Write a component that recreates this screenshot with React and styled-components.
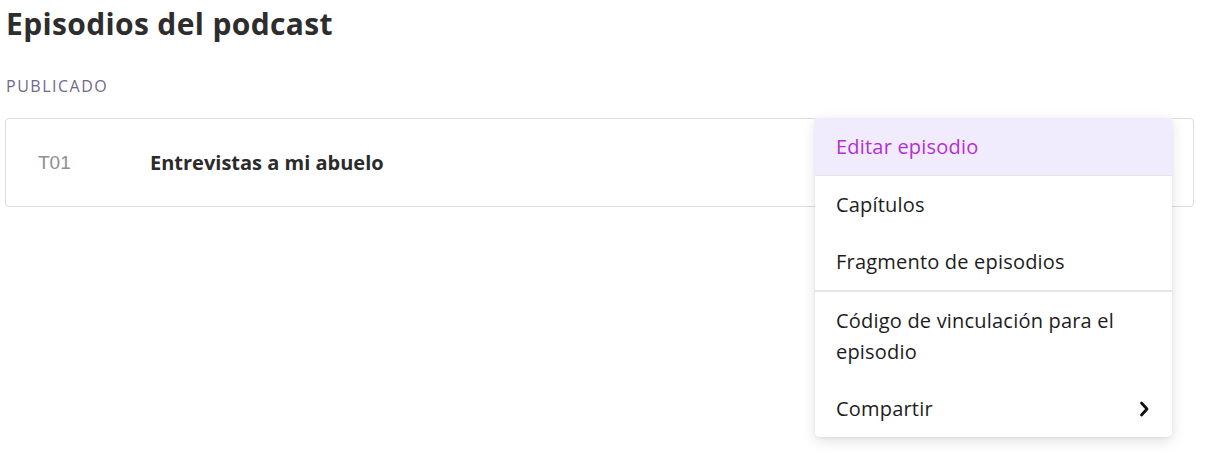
import styled, { createGlobalStyle } from 'styled-components'

const Global = createGlobalStyle`
  html, body, #root {
    min-height: 100%;
  }
  body {
    margin: 0;
    background: #fff;
    font-family: "Open Sans", Lato, sans-serif;
    color: #2b2b2b;
  }
`

const Page = styled.div`
  min-height: 472px;
  padding: 2px 14px 0 5px;
`

const Heading = styled.h1`
  margin: 0 0 0 1px;
  font-size: 30px;
  font-weight: 700;
  line-height: 44px;
  letter-spacing: 0.35px;
  color: #2d2d2d;
`

const Section = styled.h2`
  margin: 30px 0 0 1px;
  font-size: 16px;
  font-weight: 500;
  letter-spacing: 1.5px;
  color: #74688a;
  text-transform: uppercase;
  line-height: 20px;
`

const Card = styled.div`
  position: relative;
  margin-top: 22px;
  height: 87px;
  border: 1px solid #dcdcdc;
  border-radius: 4px;
  display: flex;
  align-items: center;
`

const Season = styled.span`
  width: 112px;
  padding-left: 32px;
  font-family: "Liberation Sans", Arial, sans-serif;
  font-size: 19px;
  color: #8f8f8f;
`

const Title = styled.span`
  font-size: 20px;
  font-weight: 700;
  color: #2b2b2b;
`

const Menu = styled.ul`
  position: absolute;
  top: -1px;
  right: 21px;
  width: 357px;
  margin: 0;
  padding: 0;
  list-style: none;
  background: #fff;
  border-radius: 0 0 5px 5px;
  box-shadow: 0 4px 14px rgba(0, 0, 0, 0.12), 0 1px 3px rgba(0, 0, 0, 0.06);
  overflow: hidden;
  z-index: 2;
`

const Item = styled.li`
  display: flex;
  align-items: center;
  justify-content: space-between;
  padding: 13px 22px 13px 21px;
  min-height: 31px;
  font-size: 20px;
  letter-spacing: 0.2px;
  line-height: 31px;
  color: ${p => (p.$active ? '#b52fd6' : '#1d1d1d')};
  background: ${p => (p.$active ? '#f0ecfd' : '#fff')};
  border-bottom: ${p => (p.$divider ? `${p.$divider}px solid #e6e6e6` : 'none')};
`

const Chevron = () => (
  <svg width="12" height="18" viewBox="0 0 12 18">
    <path d="M3.5 3 L9 9 L3.5 15" fill="none" stroke="#111" strokeWidth="2.8" strokeLinecap="round" strokeLinejoin="round" />
  </svg>
)

export default function App() {
  return (
    <Page>
      <Global />
      <Heading>Episodios del podcast</Heading>
      <Section>Publicado</Section>
      <Card>
        <Season>T01</Season>
        <Title>Entrevistas a mi abuelo</Title>
        <Menu>
          <Item $active $divider={1}>Editar episodio</Item>
          <Item>Capítulos</Item>
          <Item $divider={2}>Fragmento de episodios</Item>
          <Item>Código de vinculación para el episodio</Item>
          <Item>
            Compartir
            <Chevron />
          </Item>
        </Menu>
      </Card>
    </Page>
  )
}
